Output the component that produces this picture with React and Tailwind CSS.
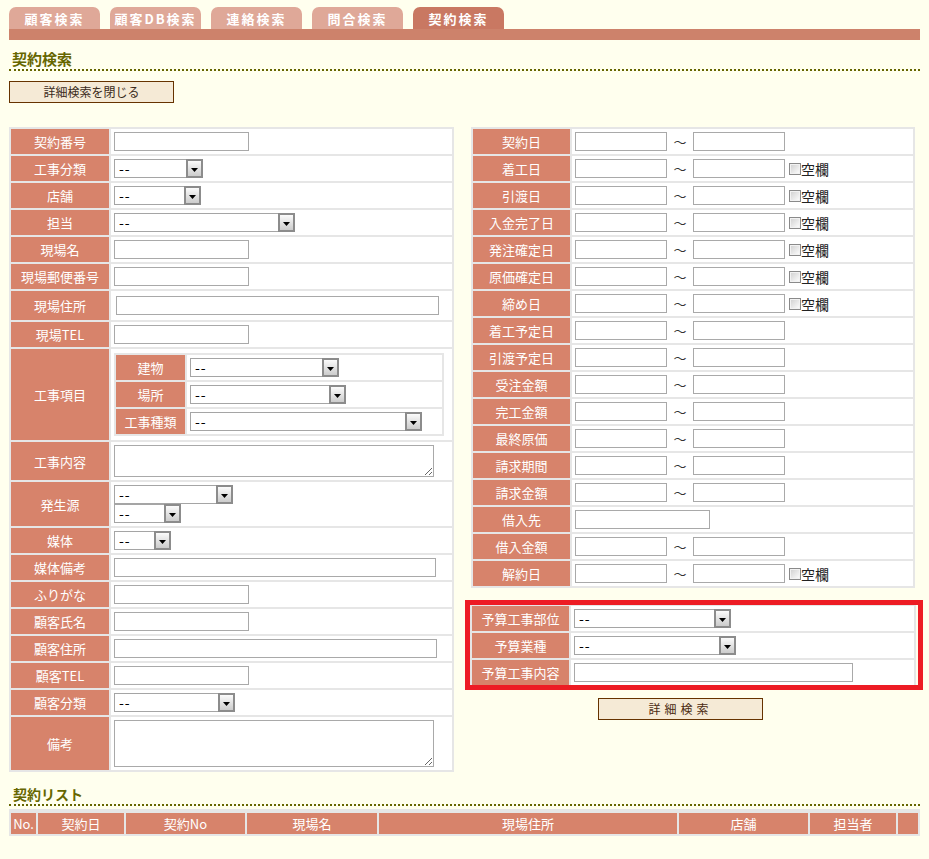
import React from 'react';

const LBL = "bg-[#d7836b] text-white text-[13px] leading-none flex items-center justify-center shrink-0";

function Inp({ w }) {
  return <input readOnly className={`h-[19px] border border-[#a9a9a9] bg-white ${w}`} />;
}

function Sel({ w }) {
  return (
    <div className={`h-[19px] border border-[#a5a5a5] bg-white flex items-stretch ${w}`}>
      <span className="flex-1 pl-[4px] text-[14px] leading-[17px] tracking-[1px] text-black">--</span>
      <span className="w-[17px] -my-px -mr-px border-2 border-[#8c8c8c] bg-gradient-to-b from-[#fbfbfb] to-[#cccccc] flex items-center justify-center pt-[2px]">
        <svg width="7" height="4" viewBox="0 0 7 4">
          <path d="M0 0h7L3.5 4z" fill="#000" />
        </svg>
      </span>
    </div>
  );
}

function Check() {
  return (
    <>
      <span className="ml-[4px] w-[12px] h-[12px] border border-[#8a8a8a] bg-gradient-to-br from-[#cfcfcf] to-[#ffffff] shadow-[inset_0_0_0_1px_#f2f2f2]" />
      <span className="text-[14px] leading-none text-[#222]">空欄</span>
    </>
  );
}

function Range({ cb }) {
  return (
    <>
      <Inp w="w-[92px]" />
      <span className="w-[26px] text-center text-[13px] leading-none text-[#333]">～</span>
      <Inp w="w-[92px]" />
      {cb && <Check />}
    </>
  );
}

function Row({ label, h = "h-[25px]", lw = "w-[98px]", col, children }) {
  return (
    <div className={`flex gap-[2px] ${h}`}>
      <div className={`${LBL} ${lw}`}>{label}</div>
      <div className={`flex-1 bg-white flex pl-[3px] ${col ? "flex-col justify-center items-start" : "items-center"}`}>
        {children}
      </div>
    </div>
  );
}

const tabs = ['顧客検索', '顧客DB検索', '連絡検索', '問合検索', '契約検索'];

const listCols = [
  ['No.', 'w-[25px]'],
  ['契約日', 'w-[86px]'],
  ['契約No', 'w-[119px]'],
  ['現場名', 'w-[130px]'],
  ['現場住所', 'w-[298px]'],
  ['店舗', 'w-[129px]'],
  ['担当者', 'w-[86px]'],
  ['', 'w-[20px]'],
];

const rightRows = [
  ['契約日', false], ['着工日', true], ['引渡日', true], ['入金完了日', true],
  ['発注確定日', true], ['原価確定日', true], ['締め日', true], ['着工予定日', false],
  ['引渡予定日', false], ['受注金額', false], ['完工金額', false], ['最終原価', false],
  ['請求期間', false], ['請求金額', false],
];

export default function App() {
  return (
    <div className="min-h-[859px] bg-[#ffffee] pt-[7px] px-[9px] font-['Noto_Sans_CJK_JP',sans-serif]">
      {/* Tabs */}
      <div className="flex gap-[10px]">
        {tabs.map((t, i) => (
          <div
            key={t}
            className={`w-[91px] h-[22px] rounded-t-[7px] flex items-center justify-center text-white font-bold text-[13px] tracking-[2px] leading-none ${i === 4 ? 'bg-[#c97862]' : 'bg-[#dfa898]'}`}
          >
            {t}
          </div>
        ))}
      </div>
      <div className="h-[11px] w-[911px] bg-[#cd826b]" />

      {/* Heading */}
      <div className="mt-[10px] w-[911px] h-[21px] border-b-2 border-dotted border-[#666600] pl-[3px] pt-[1px] text-[15px] font-bold leading-[16px] text-[#666600]">
        契約検索
      </div>

      <button className="mt-[10px] w-[165px] h-[22px] border border-[#663300] bg-[#f5ead6] text-[12px] leading-none text-[#3a2a1a]">
        詳細検索を閉じる
      </button>

      <div className="mt-[24px] flex gap-[11px] items-start">
        {/* Left table */}
        <div className="w-[445px] shrink-0 flex flex-col gap-[2px] p-[2px] bg-[#e6e6e6]">
          <Row label="契約番号"><Inp w="w-[135px]" /></Row>
          <Row label="工事分類"><Sel w="w-[89px]" /></Row>
          <Row label="店舗"><Sel w="w-[87px]" /></Row>
          <Row label="担当"><Sel w="w-[181px]" /></Row>
          <Row label="現場名"><Inp w="w-[135px]" /></Row>
          <Row label="現場郵便番号"><Inp w="w-[135px]" /></Row>
          <Row label="現場住所" h="h-[29px]"><span className="w-[2px]" /><Inp w="w-[323px]" /></Row>
          <Row label="現場TEL"><Inp w="w-[135px]" /></Row>
          <Row label="工事項目" h="h-[91px]">
            <div className="w-[330px] flex flex-col gap-[2px] p-[2px] bg-[#e6e6e6]">
              <Row label="建物" lw="w-[69px]"><Sel w="w-[149px]" /></Row>
              <Row label="場所" lw="w-[69px]"><Sel w="w-[156px]" /></Row>
              <Row label="工事種類" lw="w-[69px]"><Sel w="w-[232px]" /></Row>
            </div>
          </Row>
          <Row label="工事内容" h="h-[38px]">
            <textarea readOnly className="w-[320px] h-[32px] border border-[#a9a9a9] bg-white" />
          </Row>
          <Row label="発生源" h="h-[44px]" col>
            <Sel w="w-[119px]" />
            <Sel w="w-[67px]" />
          </Row>
          <Row label="媒体"><Sel w="w-[57px]" /></Row>
          <Row label="媒体備考"><Inp w="w-[322px]" /></Row>
          <Row label="ふりがな"><Inp w="w-[135px]" /></Row>
          <Row label="顧客氏名"><Inp w="w-[135px]" /></Row>
          <Row label="顧客住所"><Inp w="w-[323px]" /></Row>
          <Row label="顧客TEL"><Inp w="w-[135px]" /></Row>
          <Row label="顧客分類"><Sel w="w-[121px]" /></Row>
          <Row label="備考" h="h-[53px]">
            <textarea readOnly className="w-[320px] h-[47px] border border-[#a9a9a9] bg-white" />
          </Row>
        </div>

        {/* Right column */}
        <div className="w-[458px] shrink-0 flex flex-col">
          <div className="ml-[6px] w-[444px] flex flex-col gap-[2px] p-[2px] bg-[#e6e6e6]">
            {rightRows.map(([l, cb]) => (
              <Row key={l} label={l} lw="w-[97px]"><Range cb={cb} /></Row>
            ))}
            <Row label="借入先" lw="w-[97px]"><Inp w="w-[135px]" /></Row>
            <Row label="借入金額" lw="w-[97px]"><Range /></Row>
            <Row label="解約日" lw="w-[97px]"><Range cb /></Row>
          </div>

          <div className="mt-[12px] w-[458px] h-[90px] border-[5px] border-[#ed1c24] flex">
            <div className="w-[446px] flex flex-col gap-[2px] pt-px px-[2px] bg-[#e6e6e6]">
              <Row label="予算工事部位" lw="w-[97px]"><Sel w="w-[157px]" /></Row>
              <Row label="予算業種" lw="w-[97px]"><Sel w="w-[162px]" /></Row>
              <Row label="予算工事内容" lw="w-[97px]"><Inp w="w-[279px]" /></Row>
            </div>
          </div>

          <button className="mt-[8px] ml-[133px] w-[165px] h-[22px] border border-[#663300] bg-[#f5ead6] text-[12px] leading-none tracking-[4px] text-[#4a2a10]">
            詳細検索
          </button>
        </div>
      </div>

      {/* List */}
      <div className="mt-[13px] w-[911px] h-[21px] border-b-2 border-dotted border-[#666600] pl-[4px] pt-[1px] text-[14px] font-bold leading-[16px] text-[#666600]">
        契約リスト
      </div>
      <div className="mt-[3px] w-[911px] flex gap-[2px] pt-[4px] pb-[2px] px-[2px] bg-[#e6e6e6]">
        {listCols.map(([t, w], i) => (
          <div key={i} className={`${LBL} ${w} h-[21px]`}>{t}</div>
        ))}
      </div>
    </div>
  );
}
